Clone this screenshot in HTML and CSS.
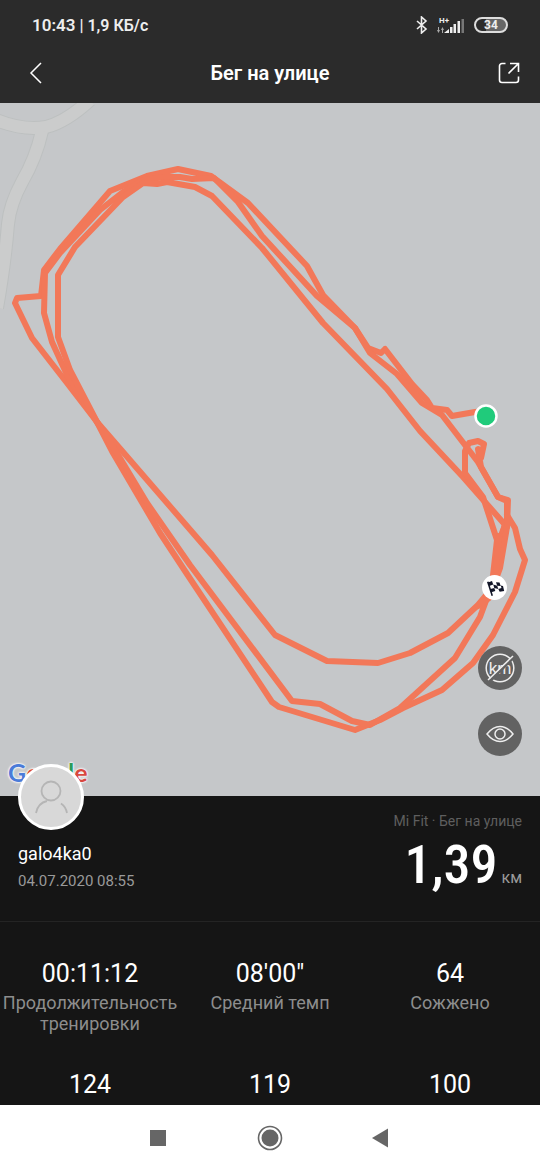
FILE: index.html
```html
<!DOCTYPE html>
<html lang="ru">
<head>
    <meta charset="UTF-8">
    <meta name="viewport" content="width=device-width, initial-scale=1.0">
    <title>Бег на улице</title>
    <link rel="stylesheet" href="styles.css">
</head>
<body>
    <div class="status-bar">
        <div class="status-left"><span class="clock">10:43</span> | 1,9 КБ/с</div>
        <div class="status-icons">
            <svg width="12" height="18" viewBox="0 0 12 18" fill="none" stroke="#eee" stroke-width="1.6">
                <path d="M1 5l9 8-4.500 4V1L10 5l-9 8"/>
            </svg>
            <svg width="28" height="18" viewBox="0 0 28 18" fill="#eee">
                <text class="net-type" x="2" y="7">H+</text>
                <path d="M1.500 11v5M5.500 17v-5" stroke="#aaa" fill="none"/>
                <path d="M0 14l1.500 3 1.500-3zM4 14l1.500-3 1.500 3z" fill="#aaa"/>
                <path d="M7 17l5-4v4zM13 11h2.500v6H13zM16.500 8h2.500v9h-2.500zM20.500 5h2.500v12h-2.500z"/>
                <path d="M24.500 3h2.500v14h-2.500z" fill="#777"/>
            </svg>
            <span class="battery">34</span>
        </div>
    </div>

    <header class="header">
        <button class="icon-btn back" type="button" aria-label="Назад">
            <svg width="22" height="24" viewBox="0 0 22 24" fill="none" stroke="#fff" stroke-width="1.5">
                <path d="M16 2L6 12l10 10"/>
            </svg>
        </button>
        <h1>Бег на улице</h1>
        <button class="icon-btn share" type="button" aria-label="Поделиться">
            <svg width="22" height="22" viewBox="0 0 22 22" fill="none" stroke="#fff" stroke-width="1.6">
                <path d="M7.500 1.500H4a2.500 2.500 0 0 0-2.500 2.500v14a2.500 2.500 0 0 0 2.500 2.500h14a2.500 2.500 0 0 0 2.500-2.500v-3.500M12 1.500h8.500V10M20.500 1.500l-10 10"/>
            </svg>
        </button>
    </header>

    <main>
        <section class="map">
            <svg class="map-canvas" viewBox="0 103 540 693" role="img" aria-label="Маршрут пробежки">
                <!-- roads -->
                <g fill="none" stroke="#bdc0c0" stroke-width="14">
                    <path d="M-6 119Q22 131 46 127Q66 122 90 100"/>
                    <path d="M42 131Q36 158 22 182Q10 204 8 224Q5 262-3 308"/>
                </g>
                <g fill="none" stroke="#cbcccc" stroke-width="12">
                    <path d="M-6 119Q22 131 46 127Q66 122 90 100"/>
                    <path d="M42 131Q36 158 22 182Q10 204 8 224Q5 262-3 308"/>
                </g>
                <!-- laps -->
                <g class="route">
                    <path d="M486 411L475 412 452 416 447 410 432 408 427 400 412 384 385 349 381 353 368 348 355 328 323 295 307 266 248 203 211 176 178 169 147 176 110 191 60 249 44 270 41 296 17 298 15 303 32 338 67 383 97 422 123 452 212 555 275 635 327 661 378 663 410 653 448 633 478 605 493 587"/>
                    <path d="M493 587L495 565 498 543 507 520 507 501 498 497 478 462 442 415 422 403 397 374 370 353 355 328 317 296 262 236 238 202 214 178 192 179 180 177 165 177 143 180 123 192 100 210 60 253 45 273 44 313 52 342 68 377 97 422 113 453 160 533 185 571 272 702 279 707 355 730 380 720 403 708 442 690 473 663 493 635 515 592 525 560 520 549 515 528 507 515"/>
                    <path d="M507 527L463 477 420 431 387 389 323 323 262 248 212 196 195 187 167 182 157 184 143 183 123 197 75 247 58 275 58 337 70 370 97 422 117 453 147 503 190 565 292 701 320 704 352 721 370 725 400 708 455 658 480 617 490 590 498 566 501 543 505 523"/>
                    <path d="M492 584L497 540 483 497 465 473 465 451 469 443 478 441 484 444 481 458 478 449 481 467 498 497 508 500 507 527 500 568 489 598 478 606"/>
                    <path d="M499 536L496 570"/>
                </g>
                <!-- start and finish -->
                <circle cx="486" cy="416" r="10.500" fill="#20cb7b" stroke="#fff" stroke-width="2.500"/>
                <circle cx="494.500" cy="587.500" r="12.500" fill="#fff"/>
                <g transform="translate(487 581)" fill="#111527">
                    <path d="M0 1l4.500 14 1.500-.500L1.500.500z"/>
                    <path d="M1 1.500l4-1.500 1.200 3.500-4 1.500zM9 1.200l3.500.300 1.200 3.500-3.500-.300zM6.200 3.500l4 1.200 1.100 3.200-4-.800zM3.300 8l4-1 1 3-4 1.200zM11.300 7.900l3.200-.900-.800-2.500 2.300.500 1.200 5-4.500.800z"/>
                </g>
            </svg>

            <div class="google" aria-label="Google">
                <span class="blue">G</span><span class="red">o</span><span class="yellow">o</span><span class="blue">g</span><span class="green">l</span><span class="red">e</span>
            </div>

            <div class="map-controls">
                <button class="map-btn" type="button" aria-label="Скрыть километры">
                    <svg width="32" height="32" viewBox="0 0 32 32" fill="none" stroke="#eee" stroke-width="1.500">
                        <circle cx="16" cy="16" r="13.800"/>
                        <text class="km-mark" x="16" y="22">km</text>
                        <path d="M6 29L31 4" stroke="#626262" stroke-width="3"/>
                        <path d="M4 28L29 4"/>
                    </svg>
                </button>
                <button class="map-btn" type="button" aria-label="Показать карту">
                    <svg width="30" height="20" viewBox="0 0 30 20" fill="none" stroke="#eee" stroke-width="1.500">
                        <path d="M2 10Q8 2.500 15 2.500T28 10Q22 17.500 15 17.500T2 10z"/>
                        <circle cx="15" cy="10" r="5"/>
                    </svg>
                </button>
            </div>
        </section>

        <section class="summary">
            <div class="user">
                <div class="avatar">
                    <svg width="60" height="60" viewBox="0 0 60 60" fill="none" stroke="#b5b5b5" stroke-width="1.800">
                        <circle cx="30" cy="24" r="9.500"/>
                        <path d="M15 46Q17 36 26 34M40 36.500Q45 40 46 46"/>
                    </svg>
                </div>
                <div class="user-name">galo4ka0</div>
                <div class="date">04.07.2020 08:55</div>
            </div>
            <div class="distance">
                <div class="source">Mi Fit · Бег на улице</div>
                <div class="total"><span class="total-value">1,39</span> <span class="unit">км</span></div>
            </div>
        </section>

        <section class="stats">
            <div class="stat">
                <div class="value">00:11:12</div>
                <div class="label">Продолжительность тренировки</div>
            </div>
            <div class="stat">
                <div class="value">08'00"</div>
                <div class="label">Средний темп</div>
            </div>
            <div class="stat">
                <div class="value">64</div>
                <div class="label">Сожжено</div>
            </div>
            <div class="stat"><div class="value">124</div></div>
            <div class="stat"><div class="value">119</div></div>
            <div class="stat"><div class="value">100</div></div>
        </section>
    </main>

    <nav class="nav-bar">
        <button class="nav-btn" type="button" aria-label="Недавние">
            <svg width="26" height="26" viewBox="0 0 26 26" fill="#666"><rect x="5" y="5" width="16" height="16"/></svg>
        </button>
        <button class="nav-btn" type="button" aria-label="Домой">
            <svg width="26" height="26" viewBox="0 0 26 26" fill="#666">
                <circle cx="13" cy="13" r="11.500" fill="none" stroke="#666" stroke-width="1.600"/>
                <circle cx="13" cy="13" r="8.500"/>
            </svg>
        </button>
        <button class="nav-btn" type="button" aria-label="Назад">
            <svg width="26" height="26" viewBox="0 0 26 26" fill="#666"><path d="M3 13l16-9.500v19z"/></svg>
        </button>
    </nav>
</body>
</html>
```
FILE: styles.css
```css
* {
    box-sizing: border-box;
}

body {
    margin: 0;
    min-height: 100vh;
    display: flex;
    flex-direction: column;
    font-family: Roboto, sans-serif;
    background-color: #151515;
    color: #fff;
}

button {
    display: flex;
    align-items: center;
    justify-content: center;
    padding: 0;
    border: none;
    background: none;
    cursor: pointer;
}

svg {
    display: block;
}

/* Top bars */
.status-bar {
    display: flex;
    align-items: center;
    justify-content: space-between;
    height: 50px;
    padding: 0 32px;
    background-color: #2b2b2b;
    color: #eee;
    font-size: 16px;
    font-weight: 600;
}

.clock {
    font-size: 17px;
}

.status-icons {
    display: flex;
    align-items: center;
    gap: 9px;
}

.net-type {
    font-size: 8px;
    font-weight: 700;
}

.battery {
    width: 34px;
    height: 16px;
    border: 2px solid #ddd;
    border-radius: 8px;
    background: linear-gradient(to right, #2b2b2b 34%, #666 34%);
    font-size: 12px;
    font-weight: 700;
    line-height: 12px;
    text-align: center;
}

.header {
    display: grid;
    grid-template-columns: 1fr auto 1fr;
    align-items: center;
    height: 53px;
    padding: 0 20px 8px;
    background-color: #2b2b2b;
}

.back {
    justify-self: start;
    padding-left: 5px;
}

.share {
    justify-self: end;
}

h1 {
    margin: 0;
    font-size: 20px;
    font-weight: 600;
}

/* Map */
.map {
    position: relative;
    background-color: #c5c7c9;
}

.map-canvas {
    width: 100%;
    height: auto;
}

.route {
    fill: none;
    stroke: #f27859;
    stroke-width: 6;
    stroke-linejoin: round;
    stroke-linecap: round;
}

.google {
    position: absolute;
    left: 8px;
    bottom: 8px;
    display: flex;
    font-family: Lato, sans-serif;
    font-size: 25px;
    font-weight: 700;
    line-height: 32px;
    text-shadow: 0 0 2px #fff, 0 0 2px #fff, 0 0 3px #fff;
}

.blue {
    color: #4a7bd8;
}

.red {
    color: #d8483f;
}

.yellow {
    color: #e8b53a;
}

.green {
    color: #2f9b56;
}

.map-controls {
    position: absolute;
    right: 18px;
    bottom: 40px;
    display: flex;
    flex-direction: column;
    gap: 22px;
}

.map-btn {
    width: 44px;
    height: 44px;
    border-radius: 50%;
    background-color: #626262;
}

.km-mark {
    fill: #eee;
    stroke: none;
    font-size: 17px;
    font-weight: 500;
    text-anchor: middle;
}

/* User and distance */
.summary {
    display: flex;
    justify-content: space-between;
    height: 126px;
    padding: 0 18px;
    border-bottom: 1px solid #242424;
}

.avatar {
    position: relative;
    width: 66px;
    height: 66px;
    margin-top: -32px;
    border: 3px solid #fff;
    border-radius: 50%;
    background-color: #d8d8d8;
}

.user-name {
    margin-top: 13px;
    font-size: 18px;
    line-height: 22px;
}

.date {
    margin-top: 6px;
    color: #9a9a9a;
    font-size: 15px;
    line-height: 20px;
}

.distance {
    padding-top: 15px;
    text-align: right;
}

.source {
    color: #5f5f5f;
    font-size: 14px;
    line-height: 20px;
}

.total {
    line-height: 68px;
}

.total-value {
    font-family: "Roboto Condensed", "Open Sans Condensed", Roboto, sans-serif;
    font-size: 54px;
    font-weight: 500;
}

.unit {
    color: #9a9a9a;
    font-size: 16px;
}

/* Stats */
.stats {
    display: grid;
    grid-template-columns: repeat(3, 1fr);
    row-gap: 36px;
    padding: 37px 0 5px;
    text-align: center;
}

.value {
    font-size: 25px;
    line-height: 30px;
}

.label {
    margin-top: 3px;
    color: #8d8d8d;
    font-size: 18px;
    line-height: 21px;
}

/* System navigation */
.nav-bar {
    display: flex;
    align-items: center;
    justify-content: center;
    gap: 86px;
    height: 65px;
    margin-top: auto;
    background-color: #fff;
}
```
